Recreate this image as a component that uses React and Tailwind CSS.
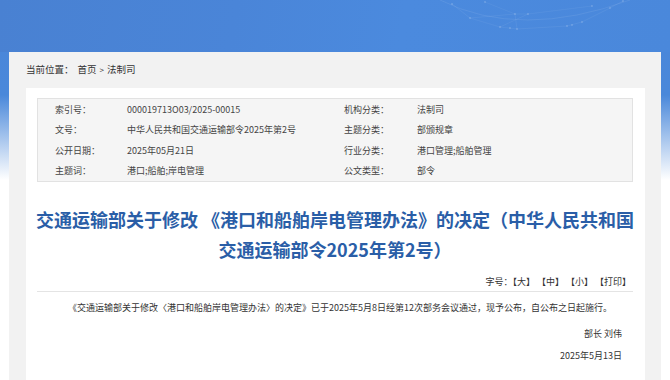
import React from "react";

const rows = [
  ["索引号：", "000019713O03/2025-00015", "机构分类：", "法制司"],
  ["文号：", "中华人民共和国交通运输部令2025年第2号", "主题分类：", "部颁规章"],
  ["公开日期：", "2025年05月21日", "行业分类：", "港口管理;船舶管理"],
  ["主题词：", "港口;船舶;岸电管理", "公文类型：", "部令"],
];

function Network() {
  const pts = [
    [452, 4], [470, 18], [515, 14], [528, 14], [500, 27], [510, 28], [517, 29],
    [567, 26], [572, 25], [582, 22], [592, 6], [610, 8], [623, 1], [485, 2],
  ];
  return (
    <svg className="absolute left-0 top-0" width="670" height="52" viewBox="0 0 670 52">
      <path d="M440 0 Q520 40 630 0" stroke="#ffffff" strokeOpacity="0.08" fill="none" />
      <path d="M452 4 L470 18 L515 14 L528 14 L500 27 L517 29 L567 26 L582 22 L610 8 L623 1" stroke="#ffffff" strokeOpacity="0.06" fill="none" />
      <path d="M470 18 L500 27 M515 14 L517 29 M528 14 L592 6 M485 2 L515 14" stroke="#ffffff" strokeOpacity="0.05" fill="none" />
      {pts.map(([x, y], i) => (
        <circle key={i} cx={x} cy={y} r="0.9" fill="#ffffff" fillOpacity="0.2" />
      ))}
    </svg>
  );
}

export default function App() {
  return (
    <div
      className="relative h-[380px] w-[670px] overflow-hidden bg-[linear-gradient(180deg,#4a86d9_0px,#4a88da_95px,#ffffff_180px)] text-[#333]"
      style={{ fontFamily: '"Noto Sans CJK SC", "Noto Sans", sans-serif' }}
    >
      <div className="relative h-[52px] bg-[linear-gradient(100deg,#4981d2_0%,#4a85d8_35%,#4b8ade_60%,#4a88db_100%)]">
        <Network />
      </div>

      <div className="mx-[9px] h-[328px] bg-[#f2f2f2] pl-[17px] pr-[16px]">
        <div className="flex h-[36px] items-center text-[9.5px] leading-none text-[#333]">
          当前位置：<span className="ml-[4px]">首页</span>
          <span className="mx-[3px] text-[8px]">&gt;</span>法制司
        </div>

        <div className="h-[292px] bg-white px-[11px] pt-[10px] pr-[12px]">
          <div className="border border-[#e2e2e2] bg-[#f5f5f5] text-[9px] text-[#444]">
            {rows.map((r) => (
              <div key={r[0]} className="flex h-[20.6px] items-center pl-[17px]">
                <div className="w-[72px]">{r[0]}</div>
                <div className="w-[217px]">{r[1]}</div>
                <div className="w-[73px]">{r[2]}</div>
                <div>{r[3]}</div>
              </div>
            ))}
          </div>

          <h1 className="-mx-[4px] mt-[22px] whitespace-nowrap text-center text-[18px] font-bold leading-[30px] text-[#2a5ea7]">
            交通运输部关于修改 《港口和船舶岸电管理办法》的决定（中华人民共和国
            <br />
            交通运输部令2025年第2号）
          </h1>

          <div className="mt-[11px] flex justify-end pr-[2px] text-[9px] leading-[14px] text-[#333]">
            字号：【大】 【中】 【小】 【打印】
          </div>
          <div className="mt-[2px] h-px bg-[#e4e4e4]" />

          <p className="mt-[9px] pl-[31px] text-[9px] leading-[14px] text-[#333]">
            《交通运输部关于修改〈港口和船舶岸电管理办法〉的决定》已于2025年5月8日经第12次部务会议通过，现予公布，自公布之日起施行。
          </p>
          <p className="mt-[12px] pr-[11px] text-right text-[9px] leading-[14px] text-[#333]">部长 刘伟</p>
          <p className="mt-[8px] pr-[11px] text-right text-[9px] leading-[14px] text-[#333]">2025年5月13日</p>
        </div>
      </div>
    </div>
  );
}
